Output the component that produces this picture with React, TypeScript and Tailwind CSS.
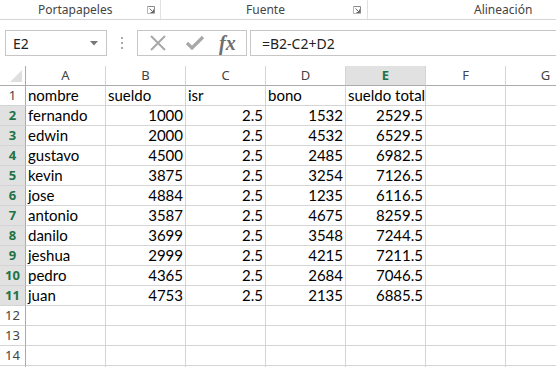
import React from "react";

type Row = {
  nombre: string;
  sueldo: number;
  isr: number;
  bono: number;
  total: string;
};

const rows: Row[] = [
  { nombre: "fernando", sueldo: 1000, isr: 2.5, bono: 1532, total: "2529.5" },
  { nombre: "edwin", sueldo: 2000, isr: 2.5, bono: 4532, total: "6529.5" },
  { nombre: "gustavo", sueldo: 4500, isr: 2.5, bono: 2485, total: "6982.5" },
  { nombre: "kevin", sueldo: 3875, isr: 2.5, bono: 3254, total: "7126.5" },
  { nombre: "jose", sueldo: 4884, isr: 2.5, bono: 1235, total: "6116.5" },
  { nombre: "antonio", sueldo: 3587, isr: 2.5, bono: 4675, total: "8259.5" },
  { nombre: "danilo", sueldo: 3699, isr: 2.5, bono: 3548, total: "7244.5" },
  { nombre: "jeshua", sueldo: 2999, isr: 2.5, bono: 4215, total: "7211.5" },
  { nombre: "pedro", sueldo: 4365, isr: 2.5, bono: 2684, total: "7046.5" },
  { nombre: "juan", sueldo: 4753, isr: 2.5, bono: 2135, total: "6885.5" },
];

const columns = ["A", "B", "C", "D", "E", "F", "G"];

const cellFont = { fontFamily: "Lato, 'Open Sans', sans-serif" };
const uiFont = { fontFamily: "'Noto Sans', 'Open Sans', sans-serif" };

const Launcher = () => (
  <svg width="8" height="8" viewBox="0 0 8 8" className="ml-auto">
    <path d="M0.5 0.5h7v7" fill="none" stroke="#8a8a8a" />
    <path d="M0.5 0.5v7h7" fill="none" stroke="#b5b5b5" />
    <path d="M2.5 2.5l4 4M6.5 3.5v3h-3" fill="none" stroke="#666" />
  </svg>
);

const Cell = ({
  children,
  right,
}: {
  children?: React.ReactNode;
  right?: boolean;
}) => (
  <div
    className={`h-[20px] border-r border-b border-[#d4d4d4] px-[2px] leading-[19px] text-[15px] text-black whitespace-nowrap overflow-visible ${
      right ? "text-right" : "text-left"
    }`}
    style={cellFont}
  >
    {children}
  </div>
);

const RowHead = ({ n, sel }: { n?: number; sel?: boolean }) => (
  <div
    className={`h-[20px] border-r border-b border-r-[#ababab] border-b-[#d4d4d4] text-center leading-[19px] text-[13px] ${
      sel ? "bg-[#e1e1e1] font-bold text-[#217346]" : "text-[#444]"
    }`}
    style={uiFont}
  >
    {n}
  </div>
);

export default function App() {
  return (
    <div className="w-[556px] h-[367px] overflow-hidden bg-white">
      {/* ribbon group labels */}
      <div
        className="flex h-[20px] border-b border-[#d5d5d5] text-[12px] text-[#444]"
        style={uiFont}
      >
        <div className="flex w-[161px] items-center border-r border-[#e1e1e1] pr-[5px]">
          <span className="ml-[38px]">Portapapeles</span>
          <Launcher />
        </div>
        <div className="flex w-[207px] items-center border-r border-[#e1e1e1] pr-[6px]">
          <span className="ml-[85px]">Fuente</span>
          <Launcher />
        </div>
        <div className="flex flex-1 items-center">
          <span className="ml-[106px]">Alineación</span>
        </div>
      </div>

      {/* formula bar */}
      <div className="flex h-[46px] items-start pt-[10px]">
        <div
          className="ml-[5px] flex h-[26px] w-[102px] items-center border border-[#c6c6c6] pl-[7px] pr-[6px] text-[14px] text-[#222]"
          style={uiFont}
        >
          <span>E2</span>
          <svg width="8" height="5" viewBox="0 0 8 5" className="ml-auto mr-[2px]">
            <path d="M0 0h8L4 4.5z" fill="#777" />
          </svg>
        </div>
        <div className="flex w-[30px] h-[26px] flex-col items-center justify-center gap-[3px]">
          <span className="block h-[2px] w-[2px] bg-[#aaa]" />
          <span className="block h-[2px] w-[2px] bg-[#aaa]" />
          <span className="block h-[2px] w-[2px] bg-[#aaa]" />
        </div>
        <div className="flex h-[26px] w-[110px] items-center border border-[#c6c6c6]">
          <svg width="18" height="18" viewBox="0 0 18 18" className="ml-[11px]">
            <path d="M2 2l14 14M16 2L2 16" stroke="#a8a8a8" strokeWidth="2" />
          </svg>
          <svg width="20" height="16" viewBox="0 0 20 16" className="ml-[18px]">
            <path d="M2 8l5 5L18 2" fill="none" stroke="#a8a8a8" strokeWidth="3.2" />
          </svg>
          <span
            className="ml-[14px] text-[20px] italic font-bold leading-none text-[#6e6e6e]"
            style={{ fontFamily: "'Liberation Serif', serif" }}
          >
            fx
          </span>
        </div>
        <div
          className="ml-[3px] flex h-[26px] flex-1 items-center border-y border-l border-[#c6c6c6] pl-[11px] text-[14px] text-[#222]"
          style={uiFont}
        >
          =B2-C2+D2
        </div>
      </div>

      {/* grid */}
      <div className="grid grid-cols-[26px_repeat(7,80px)]">
        <div className="relative h-[20px] border-r border-b border-[#ababab]">
          <svg width="12" height="12" viewBox="0 0 12 12" className="absolute right-[3px] bottom-[3px]">
            <path d="M12 0V12H0z" fill="#dfdfdf" />
          </svg>
        </div>
        {columns.map((c) => (
          <div
            key={c}
            className={`h-[20px] border-b border-r border-b-[#ababab] border-r-[#d4d4d4] text-center leading-[19px] text-[13px] ${
              c === "E" ? "bg-[#e1e1e1] font-bold text-[#217346]" : "text-[#444]"
            }`}
            style={uiFont}
          >
            {c}
          </div>
        ))}

        <RowHead n={1} />
        <Cell>nombre</Cell>
        <Cell>sueldo</Cell>
        <Cell>isr</Cell>
        <Cell>bono</Cell>
        <Cell>sueldo total</Cell>
        <Cell />
        <Cell />

        {rows.map((r, i) => (
          <React.Fragment key={r.nombre}>
            <RowHead n={i + 2} sel />
            <Cell>{r.nombre}</Cell>
            <Cell right>{r.sueldo}</Cell>
            <Cell right>{r.isr}</Cell>
            <Cell right>{r.bono}</Cell>
            <Cell right>{r.total}</Cell>
            <Cell />
            <Cell />
          </React.Fragment>
        ))}

        {[12, 13, 14, 0].map((n) => (
          <React.Fragment key={n}>
            <RowHead n={n || undefined} />
            {columns.map((c) => (
              <Cell key={c} />
            ))}
          </React.Fragment>
        ))}
      </div>
    </div>
  );
}
